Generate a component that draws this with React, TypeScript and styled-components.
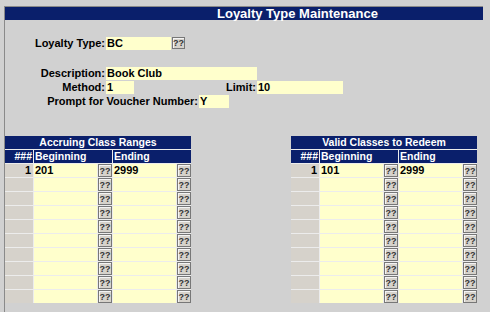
import React from "react";
import styled, { createGlobalStyle } from "styled-components";

const NAVY = "#0a1f6b";
const PAGE = "#d1d1d1";
const FIELD = "#ffffcc";
const CELL = "#d6d2cb";

const GlobalStyle = createGlobalStyle`
  html, body {
    margin: 0;
    padding: 0;
    background: ${PAGE};
    font-family: "Liberation Sans", Arial, sans-serif;
  }
`;

const Frame = styled.div`
  margin: 6px 0 0 4px;
  width: 479px;
  height: 306px;
  border-left: 1px solid #8a8a8a;
  border-top: 1px solid #8a8a8a;
  box-sizing: border-box;
`;

const TitleBar = styled.div`
  height: 13px;
  background: ${NAVY};
  color: #fff;
  font-weight: bold;
  font-size: 13px;
  line-height: 13px;
  padding-left: 212px;
  white-space: nowrap;
`;

const Form = styled.div`
  display: flex;
  flex-direction: column;
  padding-top: 16px;
`;

const Row = styled.div<{ $top?: number }>`
  display: flex;
  align-items: center;
  height: 14px;
  margin-top: ${(p) => p.$top ?? 0}px;
`;

const Label = styled.span<{ $w: number }>`
  width: ${(p) => p.$w}px;
  text-align: right;
  font-size: 11px;
  font-weight: bold;
  color: #000;
  padding-right: 1px;
  white-space: nowrap;
`;

const Field = styled.input<{ $w: number }>`
  width: ${(p) => p.$w}px;
  height: 13px;
  box-sizing: border-box;
  border: none;
  margin: 0;
  padding: 0 1px;
  background: ${FIELD};
  font-family: "Liberation Sans", Arial, sans-serif;
  font-size: 11px;
  font-weight: bold;
  color: #000;
  outline: none;
`;

const Lookup = styled.button`
  width: 13px;
  height: 12px;
  padding: 0;
  margin: 0 0 0 1px;
  box-sizing: border-box;
  border: 1px solid #777;
  box-shadow: inset 1px 1px 0 #f4f4f4;
  background: ${CELL};
  color: #333;
  font-family: "Liberation Sans", Arial, sans-serif;
  font-size: 9px;
  font-weight: bold;
  line-height: 10px;
  text-align: center;
`;

const Tables = styled.div`
  display: flex;
  margin-top: 28px;
  gap: 100px;
`;

const Grid = styled.div`
  display: grid;
  grid-template-columns: 28px 63px 14px 63px 14px;
  grid-auto-rows: 13px;
  gap: 1px;
  background: #ececec;
  width: 186px;
`;

const Caption = styled.div`
  grid-column: 1 / -1;
  background: ${NAVY};
  color: #fff;
  font-size: 10.5px;
  font-weight: bold;
  line-height: 13px;
  text-align: center;
`;

const Head = styled.div<{ $span?: number; $right?: boolean }>`
  grid-column: span ${(p) => p.$span ?? 1};
  background: ${NAVY};
  color: #fff;
  font-size: 10.5px;
  font-weight: bold;
  line-height: 13px;
  text-align: ${(p) => (p.$right ? "right" : "left")};
  padding: 0 1px;
`;

const Num = styled.div`
  background: ${CELL};
  font-size: 11px;
  font-weight: bold;
  line-height: 13px;
  text-align: right;
  padding-right: 2px;
`;

const GridField = styled.div`
  background: ${FIELD};
  font-size: 11px;
  font-weight: bold;
  line-height: 13px;
  padding-left: 1px;
`;

const GridBtn = styled(Lookup)`
  width: 14px;
  height: 13px;
  margin: 0;
`;

type Range = { beg: string; end: string };

function RangeTable({ title, first }: { title: string; first: Range }) {
  const rows = Array.from({ length: 10 }, (_, i) => (i === 0 ? first : { beg: "", end: "" }));
  return (
    <Grid>
      <Caption>{title}</Caption>
      <Head $right>###</Head>
      <Head $span={2}>Beginning</Head>
      <Head $span={2}>Ending</Head>
      {rows.map((r, i) => (
        <React.Fragment key={i}>
          <Num>{i === 0 ? "1" : ""}</Num>
          <GridField>{r.beg}</GridField>
          <GridBtn>??</GridBtn>
          <GridField>{r.end}</GridField>
          <GridBtn>??</GridBtn>
        </React.Fragment>
      ))}
    </Grid>
  );
}

export default function App() {
  return (
    <>
      <GlobalStyle />
      <Frame>
        <TitleBar>Loyalty Type Maintenance</TitleBar>
        <Form>
          <Row>
            <Label $w={100}>Loyalty Type:</Label>
            <Field $w={65} readOnly value="BC" />
            <Lookup>??</Lookup>
          </Row>
          <Row $top={16}>
            <Label $w={100}>Description:</Label>
            <Field $w={151} readOnly value="Book Club" />
          </Row>
          <Row>
            <Label $w={100}>Method:</Label>
            <Field $w={28} readOnly value="1" />
            <Label $w={122}>Limit:</Label>
            <Field $w={86} readOnly value="10" />
          </Row>
          <Row>
            <Label $w={193}>Prompt for Voucher Number:</Label>
            <Field $w={30} readOnly value="Y" />
          </Row>
        </Form>
        <Tables>
          <RangeTable title="Accruing Class Ranges" first={{ beg: "201", end: "2999" }} />
          <RangeTable title="Valid Classes to Redeem" first={{ beg: "101", end: "2999" }} />
        </Tables>
      </Frame>
    </>
  );
}
